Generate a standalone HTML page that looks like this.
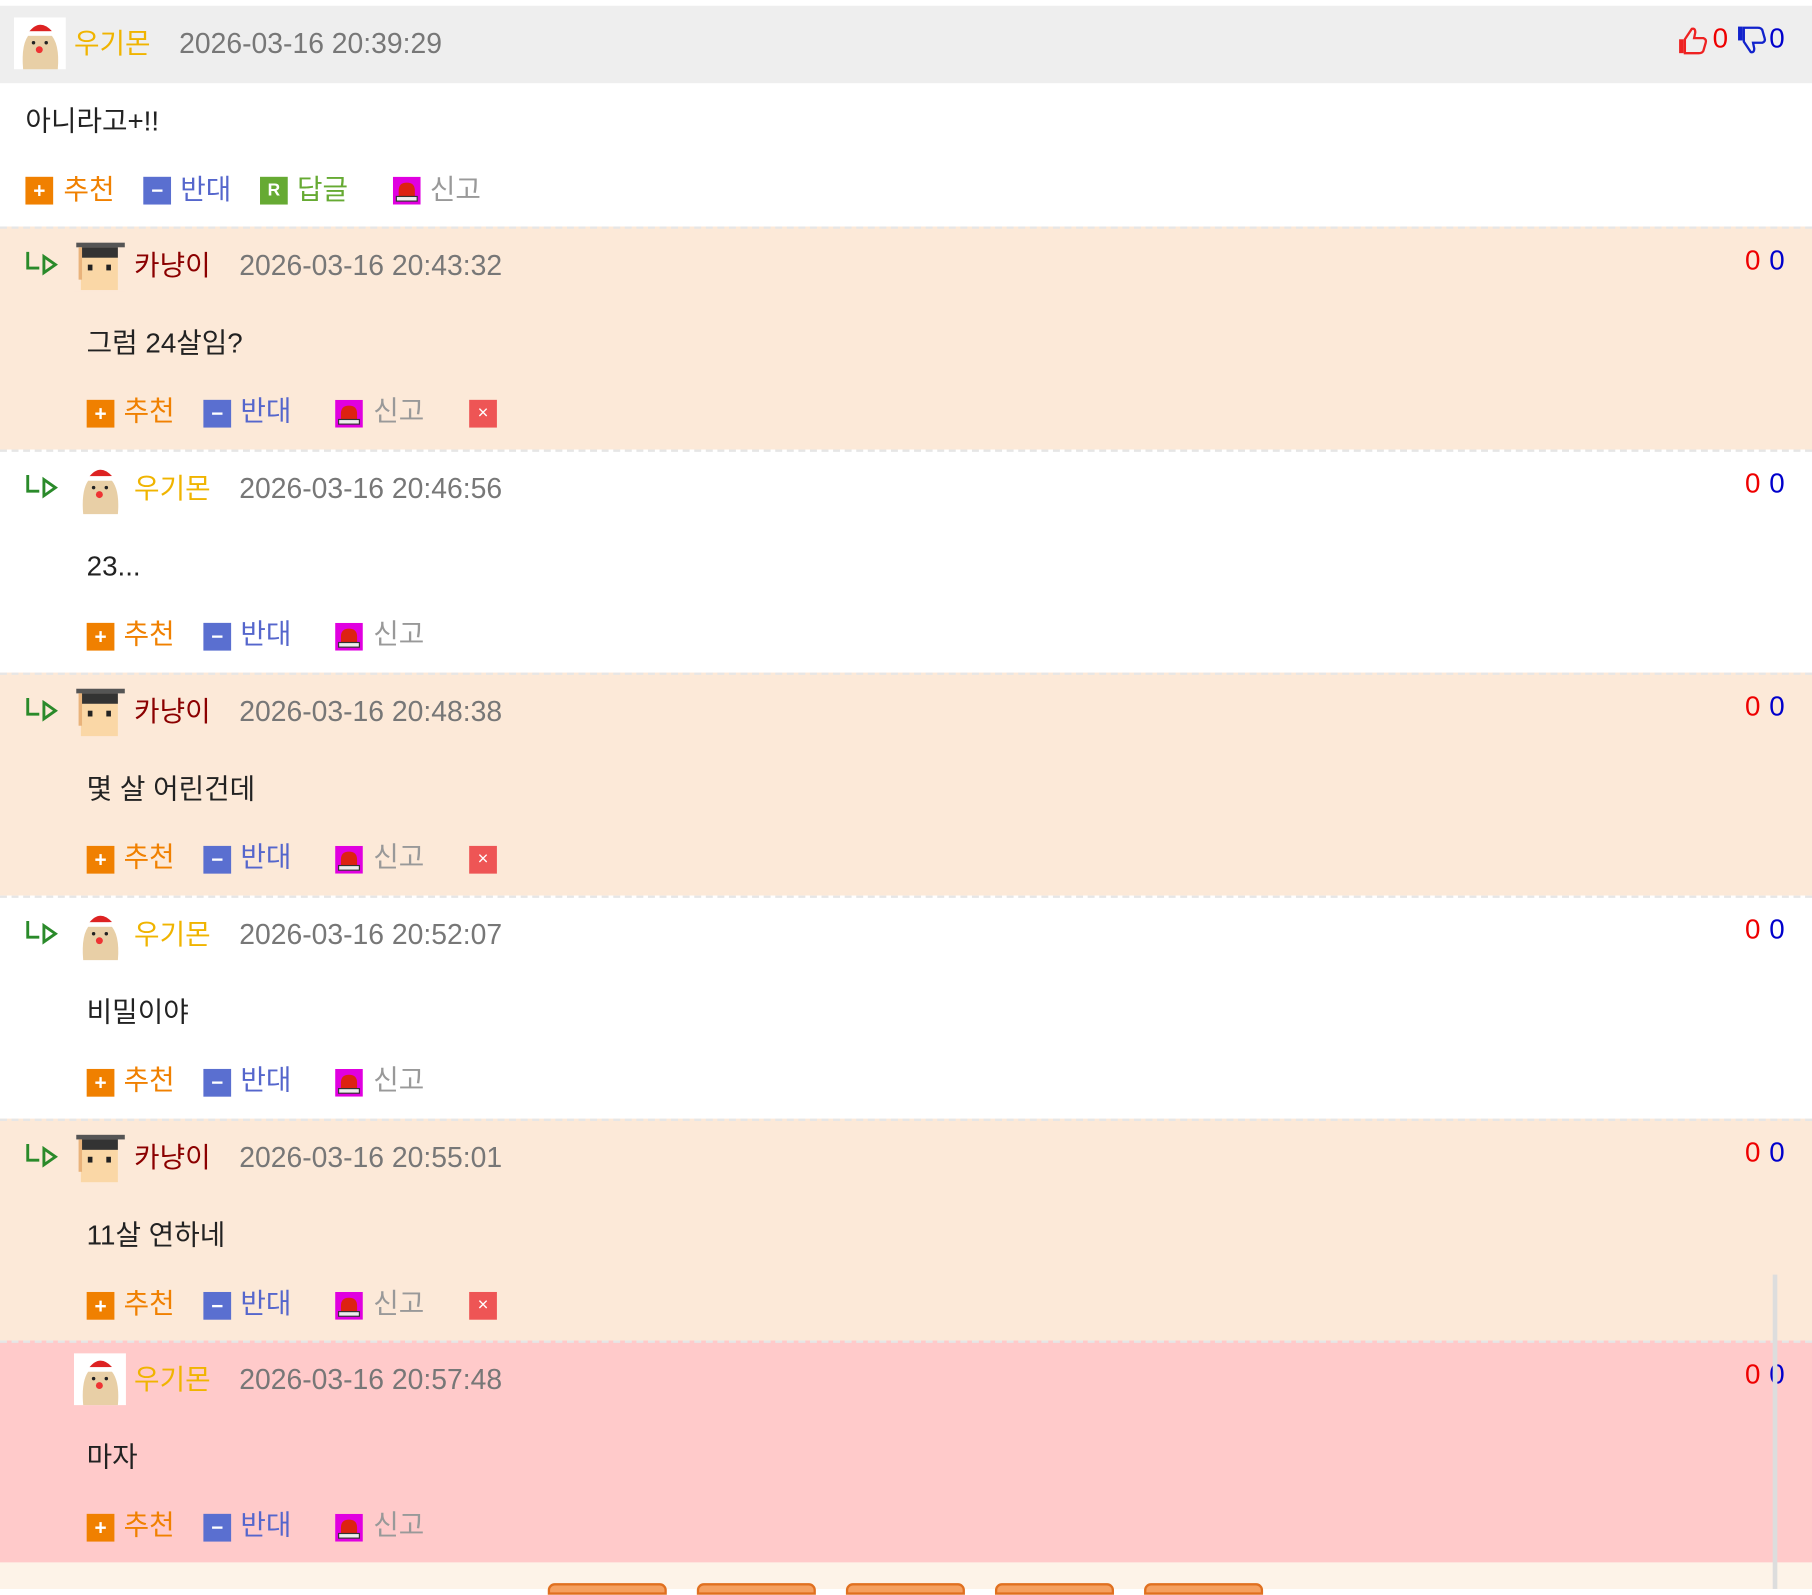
<!DOCTYPE html>
<html><head><meta charset="utf-8"><style>
*{margin:0;padding:0;box-sizing:border-box}
html,body{width:1812px;height:1589px;overflow:hidden;background:#fff}
#w{position:absolute;left:0;top:0;width:1568px;height:1375px;transform:scale(1.15561);transform-origin:0 0;font-family:"Liberation Sans","Noto Sans CJK KR",sans-serif}
.a{position:absolute;white-space:nowrap;line-height:1}
.blk{position:absolute;left:0;width:1568px;border-top:2px dashed #e6e6e6}
.sq{position:absolute;width:24px;height:24px;color:#fff;font-size:18px;font-weight:bold;text-align:center;line-height:24px}
.nm{font-size:24px}
.dt{font-size:24.5px;color:#777}
.ct{font-size:24px;color:#222}
.ac{font-size:24px}
.av{position:absolute;width:45px;height:45px}
</style></head><body><div id="w">
<div style="position:absolute;left:0;top:5px;width:1568px;height:67px;background:#eeeeee"></div>

<svg width="0" height="0" style="position:absolute"><defs>
<g id="dog"><rect width="45" height="45" fill="#fff"/><path d="M8 45 Q6 22 14 14 Q22 8 31 14 Q40 22 38 45Z" fill="#e8cfa6"/><path d="M12 14 Q22 0 33 12Z" fill="#d22"/><rect x="11" y="12" width="23" height="4" fill="#fff"/><circle cx="22" cy="28" r="3" fill="#e33"/><circle cx="17" cy="22" r="1.5" fill="#222"/><circle cx="28" cy="22" r="1.5" fill="#222"/></g>
<g id="cat"><rect width="45" height="45" fill="#fce9d8"/><rect x="6" y="10" width="32" height="34" fill="#fad7a6"/><rect x="2" y="3" width="42" height="4" fill="#555"/><rect x="6" y="7" width="32" height="9" fill="#333"/><rect x="12" y="22" width="4" height="5" fill="#222"/><rect x="28" y="22" width="4" height="5" fill="#222"/><rect x="4" y="7" width="3" height="28" fill="#e9b37b"/></g>
<g id="arr"><path d="M2 2 V16 H12" fill="none" stroke="#2a8a2a" stroke-width="2.5"/><path d="M16 6 L26 13 L16 20Z" fill="none" stroke="#2a8a2a" stroke-width="2.5"/></g>
<g id="siren"><rect width="24" height="24" fill="#e000e0"/><path d="M5 18 V12 Q5 5 12 5 Q19 5 19 12 V18Z" fill="#d21"/><rect x="3" y="17" width="18" height="4" fill="#eee" stroke="#333"/></g>
</defs></svg>

<svg class="av" style="left:12px;top:15px" viewBox="0 0 45 45"><use href="#dog"/></svg>
<div class="a nm" style="left:64px;top:27px;color:#f0b400">우기몬</div>
<div class="a dt" style="left:155px;top:27px">2026-03-16 20:39:29</div>
<svg class="a" style="left:1452px;top:22px" width="26" height="26" viewBox="0 0 26 26"><rect x="1" y="12" width="4" height="12" fill="#e22"/><path d="M6 12 L12 3 Q15 2 15 6 L14 11 H22 Q25 12 24 15 L22 22 Q21 24 18 24 H6Z" fill="none" stroke="#e22" stroke-width="2"/></svg>
<div class="a" style="left:1482px;top:22px;font-size:24px;color:#e00">0</div>
<svg class="a" style="left:1503px;top:22px" width="26" height="26" viewBox="0 0 26 26"><rect x="1" y="1" width="4" height="12" fill="#12c"/><path d="M6 14 L12 23 Q15 24 15 20 L14 15 H22 Q25 14 24 11 L22 4 Q21 2 18 2 H6Z" fill="none" stroke="#12c" stroke-width="2"/></svg>
<div class="a" style="left:1531px;top:22px;font-size:24px;color:#00c">0</div>

<div class="a ct" style="left:22px;top:94px">아니라고+!!</div>
<div class="sq" style="left:22px;top:153px;background:#f08000">+</div><div class="a ac" style="left:55px;top:153px;color:#f08000">추천</div>
<div class="sq" style="left:124px;top:153px;background:#5a6fd0">−</div><div class="a ac" style="left:156px;top:153px;color:#5566cc">반대</div>
<div class="sq" style="left:225px;top:153px;background:#66aa33;font-size:15px">R</div><div class="a ac" style="left:257px;top:153px;color:#66aa33">답글</div>
<svg class="a" style="left:340px;top:153px" width="24" height="24"><use href="#siren"/></svg><div class="a ac" style="left:372px;top:153px;color:#999">신고</div>

<div style="position:absolute;left:0;top:1352px;width:1568px;height:23px;background:#fdf3e8"></div>
<div style="position:absolute;left:474px;top:1370px;width:103px;height:10px;border:2px solid #e07020;border-radius:6px 6px 0 0;background:#f5a060"></div>
<div style="position:absolute;left:603px;top:1370px;width:103px;height:10px;border:2px solid #e07020;border-radius:6px 6px 0 0;background:#f5a060"></div>
<div style="position:absolute;left:732px;top:1370px;width:103px;height:10px;border:2px solid #e07020;border-radius:6px 6px 0 0;background:#f5a060"></div>
<div style="position:absolute;left:861px;top:1370px;width:103px;height:10px;border:2px solid #e07020;border-radius:6px 6px 0 0;background:#f5a060"></div>
<div style="position:absolute;left:990px;top:1370px;width:103px;height:10px;border:2px solid #e07020;border-radius:6px 6px 0 0;background:#f5a060"></div>

<div id="r"></div>
<script>
var d=[
["cat","카냥이","2026-03-16 20:43:32","그럼 24살임?",1,"#fce9d8",196],
["dog","우기몬","2026-03-16 20:46:56","23...",0,"#ffffff",389],
["cat","카냥이","2026-03-16 20:48:38","몇 살 어린건데",1,"#fce9d8",582],
["dog","우기몬","2026-03-16 20:52:07","비밀이야",0,"#ffffff",775],
["cat","카냥이","2026-03-16 20:55:01","11살 연하네",1,"#fce9d8",968],
["dog","우기몬","2026-03-16 20:57:48","마자",0,"#ffcaca",1160]];
var h="";
d.forEach(function(r,i){var t=r[6];var H=(i==5?1352:d[i+1][6])-t;
h+='<div class="blk" style="top:'+t+'px;height:'+H+'px;background:'+r[5]+'"></div>';
if(i<5)h+='<svg class="a" style="left:22px;top:'+(t+20)+'px" width="30" height="24"><use href="#arr"/></svg>';
h+='<svg class="av" style="left:64px;top:'+(t+11)+'px" viewBox="0 0 45 45"><use href="#'+r[0]+'"/></svg>';
h+='<div class="a nm" style="left:116px;top:'+(t+23)+'px;color:'+(r[0]=="cat"?"#8b0000":"#f0b400")+'">'+r[1]+'</div>';
h+='<div class="a dt" style="left:207px;top:'+(t+23)+'px">'+r[2]+'</div>';
h+='<div class="a" style="left:1510px;top:'+(t+18)+'px;font-size:24px;color:#e00">0</div><div class="a" style="left:1531px;top:'+(t+18)+'px;font-size:24px;color:#00c">0</div>';
h+='<div class="a ct" style="left:75px;top:'+(t+90)+'px">'+r[3]+'</div>';
var y=t+150;
h+='<div class="sq" style="left:75px;top:'+y+'px;background:#f08000">+</div><div class="a ac" style="left:107px;top:'+(y-1)+'px;color:#f08000">추천</div>';
h+='<div class="sq" style="left:176px;top:'+y+'px;background:#5a6fd0">−</div><div class="a ac" style="left:208px;top:'+(y-1)+'px;color:#5566cc">반대</div>';
h+='<svg class="a" style="left:290px;top:'+y+'px" width="24" height="24"><use href="#siren"/></svg><div class="a ac" style="left:323px;top:'+(y-1)+'px;color:#999">신고</div>';
if(r[4])h+='<div class="sq" style="left:406px;top:'+y+'px;background:#ee5555;font-size:16px;font-weight:normal">×</div>';
});
document.getElementById("r").innerHTML=h;
</script>
<div style="position:absolute;left:1534px;top:1103px;width:4px;height:272px;background:#ddd"></div>
</div></body></html>
